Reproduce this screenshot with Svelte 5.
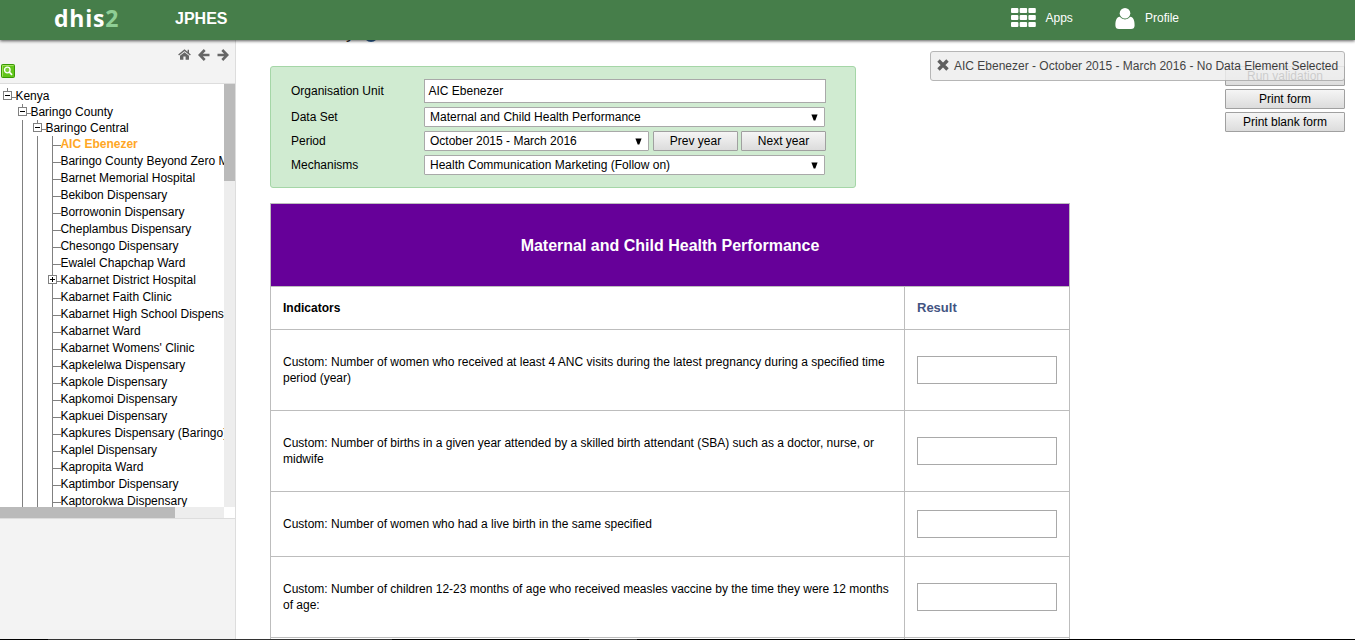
<script>
  const facilities = ['AIC Ebenezer', 'Baringo County Beyond Zero Mobile Clinic', 'Barnet Memorial Hospital', 'Bekibon Dispensary', 'Borrowonin Dispensary', 'Cheplambus Dispensary', 'Chesongo Dispensary', 'Ewalel Chapchap Ward', 'Kabarnet District Hospital', 'Kabarnet Faith Clinic', 'Kabarnet High School Dispensary', 'Kabarnet Ward', "Kabarnet Womens' Clinic", 'Kapkelelwa Dispensary', 'Kapkole Dispensary', 'Kapkomoi Dispensary', 'Kapkuei Dispensary', 'Kapkures Dispensary (Baringo)', 'Kaplel Dispensary', 'Kapropita Ward', 'Kaptimbor Dispensary', 'Kaptorokwa Dispensary'];
  const indicators = [
    { text: 'Custom: Number of women who received at least 4 ANC visits during the latest pregnancy during a specified time period (year)', h: 81 },
    { text: 'Custom: Number of births in a given year attended by a skilled birth attendant (SBA) such as a doctor, nurse, or midwife', h: 81 },
    { text: 'Custom: Number of women who had a live birth in the same specified', h: 65 },
    { text: 'Custom: Number of children 12-23 months of age who received measles vaccine by the time they were 12 months of age:', h: 81 },
    { text: '', h: 65 }
  ];
</script>

{#snippet box(open)}
  <svg class="box" width="9" height="12" viewBox="0 0 9 12" shape-rendering="crispEdges">
    <path d="M4.500 0V3" stroke="#808080" />
    <rect x=".5" y="3.500" width="8" height="8" fill="#fff" stroke="#808080" />
    <path d={open ? 'M2 7.500H7' : 'M2 7.500H7M4.500 5V10'} stroke="#000" />
  </svg>
{/snippet}

{#snippet select(label, cls)}
  <div class="select {cls}"><span>{label}</span><svg width="7" height="7" viewBox="0 0 7 7"><path d="M.4 .5H6.600L4.300 6.500H2.700Z" /></svg></div>
{/snippet}

<div class="page">
  <header>
    <div class="logo">dhis<span>2</span></div>
    <div class="title">JPHES</div>
    <nav>
      <svg width="25" height="19" viewBox="0 0 25 19" fill="#fff">
        {#each [0, 7, 14] as y}
          {#each [0, 8.700, 17.400] as x}
            <rect {x} {y} width="7.400" height="5" rx="1" />
          {/each}
        {/each}
      </svg>
      <span class="apps">Apps</span>
      <svg width="20" height="21" viewBox="0 0 20 21" fill="#fff"><ellipse cx="10" cy="5.200" rx="5.300" ry="5.200" /><path d="M4.700 8.800Q7 11.400 10 11.400T15.300 8.800C18.300 9.200 19.600 12 19.600 17.500Q19.500 21 16 21H4Q.500 21 .400 17.500C.400 12 1.700 9.200 4.700 8.800Z" /></svg>
      <span class="profile">Profile</span>
    </nav>
  </header>

  <div class="body">
    <aside>
      <div class="tools">
        <div class="arrows">
          <svg width="13" height="11" viewBox="0 0 13 11" fill="#666"><path d="M6.500 3.200L11 6.800V10.200Q11 10.700 10.500 10.700H7.600V7.400H5.400V10.700H2.500Q2 10.700 2 10.200V6.800Z" /><path d="M.600 6L6.500 1.100L12.400 6M10.300 .8V4" fill="none" stroke="#666" stroke-width="1.400" /></svg>
          <svg width="12" height="12" viewBox="0 0 12 12"><path d="M6.700 1L1.800 6L6.700 11M2 6H11.500" fill="none" stroke="#666" stroke-width="2.600" /></svg>
          <svg width="12" height="12" viewBox="0 0 12 12"><path d="M5.300 1L10.200 6L5.300 11M10 6H.5" fill="none" stroke="#666" stroke-width="2.600" /></svg>
        </div>
        <svg class="search" width="14" height="14" viewBox="0 0 14 14"><rect x=".5" y=".5" width="13" height="13" rx="1" fill="#62c51b" stroke="#399806" /><path d="M1.500 12.500V1.500H12.500" stroke="#a3e35a" fill="none" /><circle cx="6.300" cy="6" r="2.800" fill="#7ccf3b" stroke="#fff" stroke-width="1.300" /><path d="M8.300 8L11 10.800" stroke="#fff" stroke-width="1.700" /></svg>
      </div>
      <div class="treewrap">
        <div class="tree">
          <div class="node">{@render box(true)}<i></i>Kenya</div>
          <div class="node l1">{@render box(true)}<i></i>Baringo County</div>
          <div class="g1">
            <div class="node l2">{@render box(true)}<i></i>Baringo Central</div>
            <div class="g2">
              <div class="leaves">
                {#each facilities as name, i}
                  <div class="leaf" class:selected={i === 0}>
                    {#if i === 8}{@render box(false)}{/if}<i></i><span>{name}</span>
                  </div>
                {/each}
              </div>
            </div>
          </div>
        </div>
        <div class="vbar"><b></b></div>
        <div class="hbar"><b></b></div>
        <div class="corner"></div>
      </div>
    </aside>

    <main>
      <h1>Data Entry <svg width="14" height="14" viewBox="0 0 14 14"><circle cx="7" cy="7" r="7" fill="#2f6096" /><path d="M5 5.500Q5 3.500 7 3.500T9 5.500Q9 6.500 7 7.500V8.500M7 9.500V11" fill="none" stroke="#fff" stroke-width="1.300" /></svg></h1>
      <section class="form">
        <span class="lab">Organisation Unit</span><div class="input">AIC Ebenezer</div>
        <span class="lab">Data Set</span>{@render select('Maternal and Child Health Performance', 'wide')}
        <span class="lab">Period</span>
        <div class="row">{@render select('October 2015 - March 2016', 'period')}<button>Prev year</button><button>Next year</button></div>
        <span class="lab">Mechanisms</span>{@render select('Health Communication Marketing (Follow on)', 'wide')}
      </section>
      <div class="table">
        <div class="banner">Maternal and Child Health Performance</div>
        <div class="tr head"><div>Indicators</div><div>Result</div></div>
        {#each indicators as row}
          <div class="tr" style="height:{row.h}px"><div>{row.text}</div><div><span class="field"></span></div></div>
        {/each}
      </div>
    </main>
  </div>

  <div class="actions"><button>Run validation</button><button>Print form</button><button>Print blank form</button></div>
  <div class="notice">
    <svg width="12" height="12" viewBox="0 0 12 12"><path d="M1.500 1.500L10.500 10.500M10.500 1.500L1.500 10.500" stroke="#444" stroke-width="3.400" /></svg>
    <span>AIC Ebenezer - October 2015 - March 2016 - No Data Element Selected</span>
  </div>
  <div class="edge"></div>
</div>

<style>
  :global(body) { margin: 0; overflow: hidden; background: #fff; }
  * { box-sizing: border-box; }
  .page { position: relative; width: 1355px; height: 640px; overflow: hidden; font: 12px/16px "Liberation Sans", Arial, sans-serif; color: #000; display: flex; flex-direction: column; }
  svg { display: block; flex: none; }
  header { height: 40px; flex: none; background: #467e4a; color: #fff; display: flex; position: relative; z-index: 3; box-shadow: 0 1px 3px rgba(0, 0, 0, .65); }
  .logo { width: 121px; margin-left: 54px; font: 700 23px/36px "Open Sans", sans-serif; letter-spacing: .8px; }
  .logo span { color: #8fce95; }
  .title { font-size: 16px; font-weight: bold; line-height: 37px; }
  nav { display: flex; margin-left: auto; padding: 8px 176px 0 0; line-height: 20px; }
  .apps { width: 79px; padding-left: 9.500px; }
  .profile { padding-left: 10px; }
  .body { flex: 1; min-height: 0; display: flex; }
  aside { width: 236px; flex: none; background: #f3f3f3; border-right: 1px solid #ddd; }
  .tools { height: 44px; border-bottom: 1px solid #ddd; padding-top: 9px; }
  .arrows { display: flex; justify-content: flex-end; gap: 7px; padding-right: 6.500px; height: 15px; }
  .search { margin-left: 1px; }
  .treewrap { display: grid; grid-template: 423px 11px / 224px 11px; height: 435px; border-bottom: 1px solid #ddd; background: #fff; }
  .tree { overflow: hidden; white-space: nowrap; padding: 4px 0 0 3px; }
  .node { height: 16px; display: flex; }
  .node i { flex: none; width: 4px; height: 1px; background: #808080; margin: 9px -.6px 0 0; }
  .l1 { padding-left: 15px; }
  .l2 { padding-left: 15px; margin-left: -8px; }
  .g1 { border-left: 1px solid #808080; margin-left: 19px; padding-left: 3px; }
  .g2 { border-left: 1px solid #808080; margin-left: 11px; padding-left: 14px; }
  .leaves { border-left: 1px solid #808080; }
  .leaf { height: 17px; display: flex; }
  .leaf i { flex: none; width: 8px; height: 1px; background: #808080; margin: 9px -.6px 0 0; }
  .leaf .box { margin: 0 0 0 -5px; }
  .leaf .box + i { width: 4px; }
  .selected { color: #ffa726; font-weight: bold; }
  .vbar { background: #ededed; }
  .vbar b { display: block; height: 97px; background: #bababa; }
  .hbar { background: #ededed; }
  .hbar b { display: block; width: 175px; height: 11px; background: #bababa; }
  main { padding-left: 34px; flex: 1; }
  h1 { margin: -18px 0 0; font-size: 18px; font-weight: normal; color: #333; height: 44px; display: flex; gap: 9px; line-height: 20px; }
  h1 svg { margin-top: 6px; }
  .form { width: 586px; height: 122px; border: 1px solid #a5d6a7; border-radius: 3px; background: #d0ebd1; padding: 12px 20px; display: grid; grid-template-columns: 133px 402px; grid-template-rows: 24px 20px 20px 20px; row-gap: 4px; align-items: center; }
  .input { height: 24px; border: 1px solid #a9a9a9; background: #fff; padding: 3px 3.5px; }
  .select { height: 20px; border: 1px solid #a9a9a9; border-radius: 1px; background: #fff; padding: 0 6px 1px 5px; display: flex; flex: none; justify-content: space-between; align-items: center; }
  .select svg { margin-top: 1px; }
  .wide { width: 401px; }
  .period { width: 225px; }
  .row { display: flex; }
  .row button { margin-left: 4px; }
  .row button + button { margin-left: 3px; }
  button { font: 12px/16px "Liberation Sans", Arial, sans-serif; width: 85px; height: 20px; border: 1px solid #a0a0a0; border-radius: 1px; background: linear-gradient(#f5f5f5, #dcdcdc); color: #000; padding: 0; }
  .table { width: 800px; margin-top: 15px; border: 1px solid #bdbdbd; border-bottom: 0; }
  .banner { height: 82px; padding-top: 2px; background: #609; color: #fff; font-size: 16px; font-weight: bold; display: flex; align-items: center; justify-content: center; }
  .tr { display: grid; grid-template-columns: 633px 165px; border-top: 1px solid #bdbdbd; }
  .tr > div { display: flex; align-items: center; padding: 0 12px; }
  .tr > div + div { border-left: 1px solid #bdbdbd; }
  .head { height: 43px; font-weight: bold; }
  .head div + div { color: #435482; font-size: 13px; }
  .field { width: 140px; height: 28px; border: 1px solid #a9a9a9; background: #fff; }
  .actions { position: absolute; right: 10px; top: 66px; display: flex; flex-direction: column; gap: 3px; }
  .actions button { width: 120px; }
  .notice { position: absolute; left: 930px; top: 51px; width: 415px; height: 30px; border: 1px solid #aaa; border-radius: 3px; background: #eee; opacity: .85; display: flex; gap: 5px; align-items: center; padding: 0 0 1px 6px; font-size: 12px; color: #222; white-space: nowrap; }
  .notice svg { margin-top: -2px; }
  .notice span { padding-top: 1px; }
  .edge { position: absolute; left: 0; bottom: 0; width: 100%; height: 1px; background: linear-gradient(90deg, #000 48px, #333 48px 392px, #000 392px 589px, #444 589px 637px, #000 637px); }
</style>
